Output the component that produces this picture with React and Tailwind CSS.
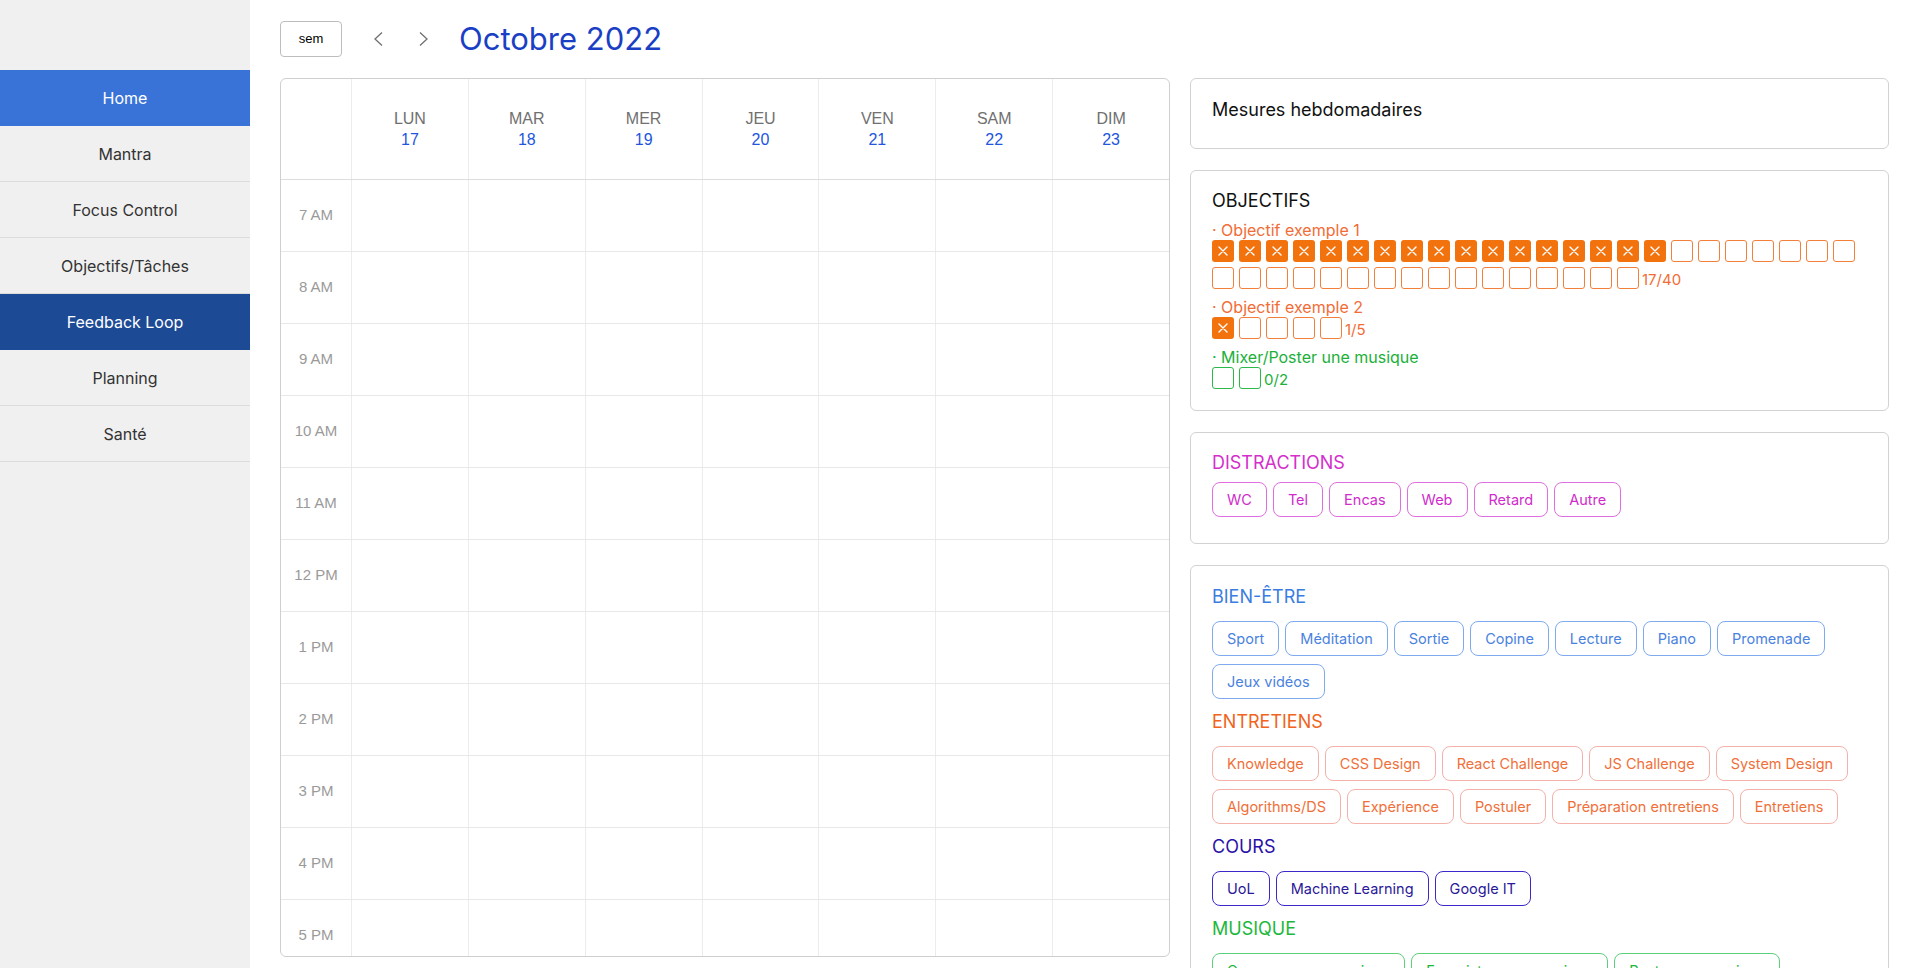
import React from 'react';

const navItems = ['Home', 'Mantra', 'Focus Control', 'Objectifs/Tâches', 'Feedback Loop', 'Planning', 'Santé'];

const days = [
    ['LUN', 17], ['MAR', 18], ['MER', 19], ['JEU', 20], ['VEN', 21], ['SAM', 22], ['DIM', 23],
];

const hours = ['7 AM', '8 AM', '9 AM', '10 AM', '11 AM', '12 PM', '1 PM', '2 PM', '3 PM', '4 PM', '5 PM', '6 PM'];

const objectives = [
    { label: 'Objectif exemple 1', done: 17, total: 40, color: 'orange' },
    { label: 'Objectif exemple 2', done: 1, total: 5, color: 'orange' },
    { label: 'Mixer/Poster une musique', done: 0, total: 2, color: 'green' },
];

const sections = [
    {
        title: 'BIEN-ÊTRE',
        head: 'text-[#3a7de0]',
        chip: 'border-[#7eaaf0] text-[#4a82e0]',
        items: ['Sport', 'Méditation', 'Sortie', 'Copine', 'Lecture', 'Piano', 'Promenade', 'Jeux vidéos'],
    },
    {
        title: 'ENTRETIENS',
        head: 'text-[#f06420]',
        chip: 'border-[#f5b2aa] text-[#f0703a]',
        items: ['Knowledge', 'CSS Design', 'React Challenge', 'JS Challenge', 'System Design', 'Algorithms/DS', 'Expérience', 'Postuler', 'Préparation entretiens', 'Entretiens'],
    },
    {
        title: 'COURS',
        head: 'text-[#2a12a8]',
        chip: 'border-[#3a28cc] text-[#2a1898]',
        items: ['UoL', 'Machine Learning', 'Google IT'],
    },
    {
        title: 'MUSIQUE',
        head: 'text-[#1cb83c]',
        chip: 'border-[#5ccf7a] text-[#1cb83c]',
        items: ['Composer une musique', 'Enregistrer une musique', 'Poster une musique'],
    },
];

function Chip({ label, className }) {
    return (
        <span className={`h-[35px] flex items-center px-[14px] border rounded-[8px] text-[14.5px] leading-5 bg-white ${className}`}>
            {label}
        </span>
    );
}

function Box({ filled, color }) {
    if (color === 'green') {
        return <span className="w-[22px] h-[22px] rounded-[3px] border-[1.5px] border-[#2db84a] bg-white" />;
    }
    if (filled) {
        return (
            <span className="w-[22px] h-[22px] rounded-[3px] bg-[#f2720e] flex items-center justify-center">
                <svg width="10" height="10" viewBox="0 0 10 10">
                    <path d="M1 1 L9 9 M9 1 L1 9" stroke="white" strokeWidth="1.4" strokeLinecap="round" />
                </svg>
            </span>
        );
    }
    return <span className="w-[22px] h-[22px] rounded-[3px] border-[1.5px] border-[#f2803a] bg-white" />;
}

export default function App() {
    return (
        <div className="h-screen w-full overflow-hidden flex bg-white font-['Inter',sans-serif]">
            {/* sidebar */}
            <aside className="w-[250px] shrink-0 bg-[#f0f0f0] pt-[70px]">
                {navItems.map((item) => {
                    let cls = 'text-[#333] border-b border-[#dcdcdc]';
                    if (item === 'Home') cls = 'bg-[#3a73d7] text-white border-b border-[#3a73d7]';
                    if (item === 'Feedback Loop') cls = 'bg-[#1d4a95] text-white border-b border-[#1d4a95]';
                    return (
                        <div key={item} className={`h-[56px] flex items-center justify-center text-[16px] ${cls}`}>
                            {item}
                        </div>
                    );
                })}
            </aside>

            {/* main */}
            <main className="flex-1 pl-[30px] pr-[22px] pt-[21px]">
                <div className="flex items-center h-[36px]">
                    <button className="w-[62px] h-[36px] border border-[#bdbdbd] rounded-[4px] text-[13px] text-black font-['Liberation_Sans',sans-serif]">
                        sem
                    </button>
                    <svg className="ml-[30px]" width="12" height="16" viewBox="0 0 12 16">
                        <path d="M10 1.5 L3 8 L10 14.5" fill="none" stroke="#707070" strokeWidth="1.3" />
                    </svg>
                    <svg className="ml-[34px]" width="12" height="16" viewBox="0 0 12 16">
                        <path d="M2 1.5 L9 8 L2 14.5" fill="none" stroke="#707070" strokeWidth="1.3" />
                    </svg>
                    <h1 className="ml-[29px] -mt-[2px] text-[31px] leading-none text-[#1b3fc4]">Octobre 2022</h1>
                </div>

                <div className="flex gap-[20px] mt-[21px]">
                    {/* calendar */}
                    <div className="w-[890px] h-[879px] shrink-0 border border-[#cfcfcf] rounded-[6px] overflow-hidden font-['Liberation_Sans',sans-serif]">
                        <div className="grid grid-cols-[70px_repeat(7,1fr)] h-[101px] border-b border-[#dddddd]">
                            <div />
                            {days.map(([d, n]) => (
                                <div key={d} className="border-l border-[#ececec] flex flex-col items-center justify-center text-[16px] leading-[21px]">
                                    <span className="text-[#707070]">{d}</span>
                                    <span className="text-[#2255dd]">{n}</span>
                                </div>
                            ))}
                        </div>
                        {hours.map((h) => (
                            <div key={h} className="grid grid-cols-[70px_repeat(7,1fr)] h-[72px] border-b border-[#e8e8e8]">
                                <div className="flex items-center justify-center text-[15px] text-[#9a9a9a]">{h}</div>
                                {days.map(([d]) => (
                                    <div key={d} className="border-l border-[#ececec]" />
                                ))}
                            </div>
                        ))}
                    </div>

                    {/* right column */}
                    <div className="flex-1 flex flex-col gap-[21px]">
                        <div className="border border-[#d2d2d2] rounded-[6px] px-[21px] pt-[20px] pb-[27px]">
                            <p className="text-[18px] leading-[22px] text-[#111]">Mesures hebdomadaires</p>
                        </div>

                        <div className="border border-[#d2d2d2] rounded-[6px] px-[21px] pt-[20px] pb-[21px]">
                            <h2 className="text-[18px] leading-5 text-[#111] mb-[10px]">OBJECTIFS</h2>
                            {objectives.map((o, i) => {
                                const txt = o.color === 'green' ? 'text-[#20b03a]' : 'text-[#f26c36]';
                                return (
                                    <div key={o.label} className={i < objectives.length - 1 ? 'mb-[9px]' : ''}>
                                        <p className={`text-[16px] leading-[19px] ${txt}`}>· {o.label}</p>
                                        <div className="flex flex-wrap gap-x-[5px] gap-y-[5px] items-end">
                                            {Array.from({ length: o.total }).map((_, k) => (
                                                <Box key={k} filled={k < o.done} color={o.color} />
                                            ))}
                                            <span className={`text-[15px] leading-[18px] -ml-[2px] ${txt}`}>{o.done}/{o.total}</span>
                                        </div>
                                    </div>
                                );
                            })}
                        </div>

                        <div className="border border-[#d2d2d2] rounded-[6px] px-[21px] pt-[20px] pb-[26px]">
                            <h2 className="text-[18px] leading-5 text-[#d42fcc] mb-[9px]">DISTRACTIONS</h2>
                            <div className="flex flex-wrap gap-x-[6px] gap-y-[8px]">
                                {['WC', 'Tel', 'Encas', 'Web', 'Retard', 'Autre'].map((c) => (
                                    <Chip key={c} label={c} className="border-[#e06ee0] text-[#cf2ccb]" />
                                ))}
                            </div>
                        </div>

                        <div className="border border-[#d2d2d2] rounded-[6px] px-[21px] pt-[21px] pb-[20px]">
                            {sections.map((s) => (
                                <div key={s.title} className="mb-[13px]">
                                    <h2 className={`text-[18px] leading-5 mb-[14px] ${s.head}`}>{s.title}</h2>
                                    <div className="flex flex-wrap gap-x-[6px] gap-y-[8px]">
                                        {s.items.map((c) => (
                                            <Chip key={c} label={c} className={s.chip} />
                                        ))}
                                    </div>
                                </div>
                            ))}
                        </div>
                    </div>
                </div>
            </main>
        </div>
    );
}
